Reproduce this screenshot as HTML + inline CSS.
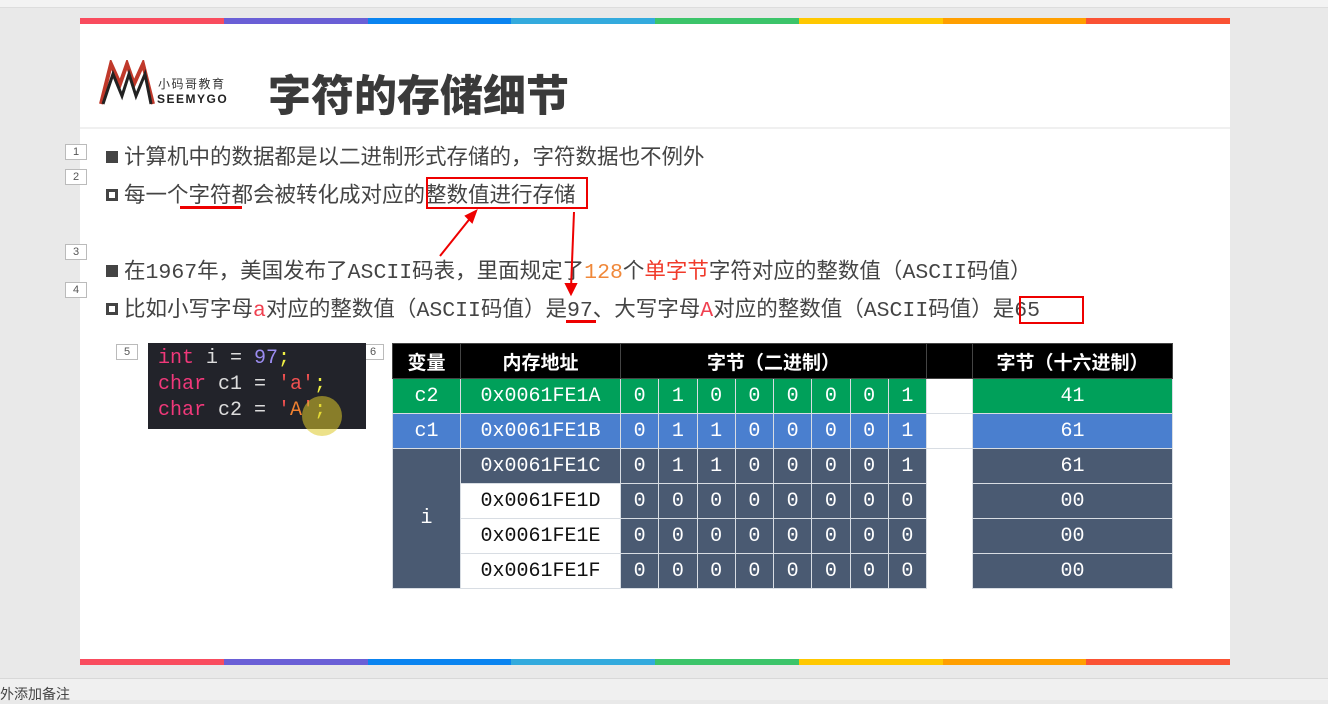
<!DOCTYPE html>
<html><head><meta charset="utf-8"><style>
*{margin:0;padding:0;box-sizing:border-box}
body{width:1328px;height:700px;background:#e9e9e9;position:relative;overflow:hidden;font-family:"Liberation Sans","Noto Sans CJK SC",sans-serif}
.abs{position:absolute}
.slide{left:80px;top:18px;width:1150px;height:647px;background:#fff}
.bar{position:absolute;left:0;width:1150px;height:6px;display:flex}
.bar div{flex:1}
.txt{position:absolute;font-size:21.5px;color:#444;white-space:nowrap;line-height:24px;font-family:"Noto Sans CJK SC",sans-serif}
.m{font-family:"Liberation Mono",monospace;font-size:21.5px}
.num{position:absolute;width:22px;height:16px;border:1px solid #bbb;background:#fff;font-size:11px;color:#555;text-align:center;line-height:14px}
.bul{display:inline-block;width:12px;height:12px;background:#444;margin-right:6px;vertical-align:1px}
.bul.o{background:#fff;border:3px solid #444}
table{border-collapse:collapse;position:absolute;left:392px;top:343px;font-family:"Liberation Mono","Noto Sans CJK SC",monospace;font-size:20px;color:#fff}
td{height:35px;text-align:center;border:1px solid #d8dde3;padding:0}
th{height:35px;background:#000;font-family:"Noto Sans CJK SC",sans-serif;font-size:19px;font-weight:bold;border:1px solid #444}
.g td{background:#00a05a}.b td{background:#4a7fcf}
.s{background:#4a5a72}
.w{background:#fff!important;color:#111}
.code{left:148px;top:343px;width:218px;height:86px;background:#22232a;font-family:"Liberation Mono",monospace;font-size:20px;line-height:26px;padding:3px 0 0 10px;color:#ddd}
</style></head><body>
<div class="abs" style="left:0;top:0;width:1328px;height:8px;background:#f3f3f3;border-bottom:1px solid #ddd"></div>
<div class="abs slide">
<div class="bar" style="top:0"><div style="background:#f94c5e"></div><div style="background:#6a5fd6"></div><div style="background:#0a84f0"></div><div style="background:#33aadd"></div><div style="background:#3cc46a"></div><div style="background:#ffc800"></div><div style="background:#ff9f00"></div><div style="background:#fa5234"></div></div>
<div class="bar" style="top:641px"><div style="background:#f94c5e"></div><div style="background:#6a5fd6"></div><div style="background:#0a84f0"></div><div style="background:#33aadd"></div><div style="background:#3cc46a"></div><div style="background:#ffc800"></div><div style="background:#ff9f00"></div><div style="background:#fa5234"></div></div>
<div class="abs" style="left:0;top:109px;width:1150px;height:2px;background:#f0f0f0"></div>
</div>
<svg class="abs" style="left:98px;top:60px" width="60" height="46" viewBox="0 0 60 46"><path d="M3 44 L13 4 L22 24 L29 4 L36 24 L45 4 L55 44" fill="none" stroke="#c0392b" stroke-width="4"/><path d="M5 44 L15 14 L24 36 L31 14 L38 36 L47 14 L53 44" fill="none" stroke="#222" stroke-width="3"/></svg>
<div class="abs" style="left:158px;top:75px;font-size:12px;color:#333;letter-spacing:1.5px;font-family:'Noto Sans CJK SC',sans-serif">小码哥教育</div>
<div class="abs" style="left:157px;top:92px;font-size:12px;color:#222;letter-spacing:1.5px;font-weight:bold">SEEMYGO</div>
<div class="abs" style="left:268px;top:63px;font-size:43px;font-weight:900;color:#3a3a3a;font-family:'Noto Sans CJK SC',sans-serif;line-height:60px">字符的存储细节</div>
<div class="num" style="left:65px;top:144px">1</div>
<div class="num" style="left:65px;top:169px">2</div>
<div class="num" style="left:65px;top:244px">3</div>
<div class="num" style="left:65px;top:282px">4</div>
<div class="num" style="left:116px;top:344px">5</div>
<div class="num" style="left:362px;top:344px">6</div>
<div class="txt" style="left:106px;top:144px"><span class="bul"></span>计算机中的数据都是以二进制形式存储的，字符数据也不例外</div>
<div class="txt" style="left:106px;top:182px"><span class="bul o"></span>每一个字符都会被转化成对应的整数值进行存储</div>
<div class="txt" style="left:106px;top:258px"><span class="bul"></span>在<span class="m">1967</span>年，美国发布了<span class="m">ASCII</span>码表，里面规定了<span class="m" style="color:#f0883a">128</span>个<span style="color:#f03a2a">单字节</span>字符对应的整数值（<span class="m">ASCII</span>码值）</div>
<div class="txt" style="left:106px;top:296px"><span class="bul o"></span>比如小写字母<span class="m" style="color:#f04050">a</span>对应的整数值（<span class="m">ASCII</span>码值）是<span class="m">97</span>、大写字母<span class="m" style="color:#f04050">A</span>对应的整数值（<span class="m">ASCII</span>码值）是<span class="m">65</span></div>
<div class="abs" style="left:180px;top:206px;width:62px;height:3px;background:#e00"></div>
<div class="abs" style="left:566px;top:320px;width:30px;height:3px;background:#e00"></div>
<div class="abs" style="left:426px;top:177px;width:162px;height:32px;border:2px solid #e00"></div>
<div class="abs" style="left:1019px;top:296px;width:65px;height:28px;border:2px solid #e00"></div>
<svg class="abs" style="left:0;top:0" width="1328" height="700"><g stroke="#e00" stroke-width="2" fill="#e00"><line x1="440" y1="256" x2="472" y2="216"/><polygon points="476,211 466,216 472,222"/><line x1="574" y1="212" x2="571" y2="288"/><polygon points="571,294 566,284 576,284"/></g></svg>
<div class="abs code"><span style="color:#f0387a">int</span> i = <span style="color:#9b8cf0">97</span><span style="color:#ee4">;</span><br><span style="color:#f0387a">char</span> c1 = <span style="color:#f05050">'a'</span><span style="color:#ee4">;</span><br><span style="color:#f0387a">char</span> c2 = <span style="color:#f05050">'<span style="color:#f08030">A</span>'</span><span style="color:#ee4">;</span></div>
<div class="abs" style="left:302px;top:396px;width:40px;height:40px;border-radius:50%;background:rgba(220,200,40,.55)"></div>
<table>
<tr><th style="width:68px">变量</th><th style="width:160px">内存地址</th><th colspan="8" style="width:306px">字节（二进制）</th><th style="width:46px"></th><th style="width:200px">字节（十六进制）</th></tr>
<tr class="g"><td>c2</td><td>0x0061FE1A</td><td>0</td><td>1</td><td>0</td><td>0</td><td>0</td><td>0</td><td>0</td><td>1</td><td class="w"></td><td>41</td></tr>
<tr class="b"><td>c1</td><td>0x0061FE1B</td><td>0</td><td>1</td><td>1</td><td>0</td><td>0</td><td>0</td><td>0</td><td>1</td><td class="w"></td><td>61</td></tr>
<tr><td class="s" rowspan="4">i</td><td class="s">0x0061FE1C</td><td class="s">0</td><td class="s">1</td><td class="s">1</td><td class="s">0</td><td class="s">0</td><td class="s">0</td><td class="s">0</td><td class="s">1</td><td class="w" rowspan="4" style="border:none"></td><td class="s">61</td></tr>
<tr><td class="w">0x0061FE1D</td><td class="s">0</td><td class="s">0</td><td class="s">0</td><td class="s">0</td><td class="s">0</td><td class="s">0</td><td class="s">0</td><td class="s">0</td><td class="s">00</td></tr>
<tr><td class="w">0x0061FE1E</td><td class="s">0</td><td class="s">0</td><td class="s">0</td><td class="s">0</td><td class="s">0</td><td class="s">0</td><td class="s">0</td><td class="s">0</td><td class="s">00</td></tr>
<tr><td class="w">0x0061FE1F</td><td class="s">0</td><td class="s">0</td><td class="s">0</td><td class="s">0</td><td class="s">0</td><td class="s">0</td><td class="s">0</td><td class="s">0</td><td class="s">00</td></tr>
</table>
<div class="abs" style="left:0;top:678px;width:1328px;height:22px;background:#f0f0f0;border-top:1px solid #d8d8d8"></div>
<div class="abs" style="left:0;top:684px;font-size:14px;color:#444;font-family:'Noto Sans CJK SC',sans-serif">外添加备注</div>
</body></html>
